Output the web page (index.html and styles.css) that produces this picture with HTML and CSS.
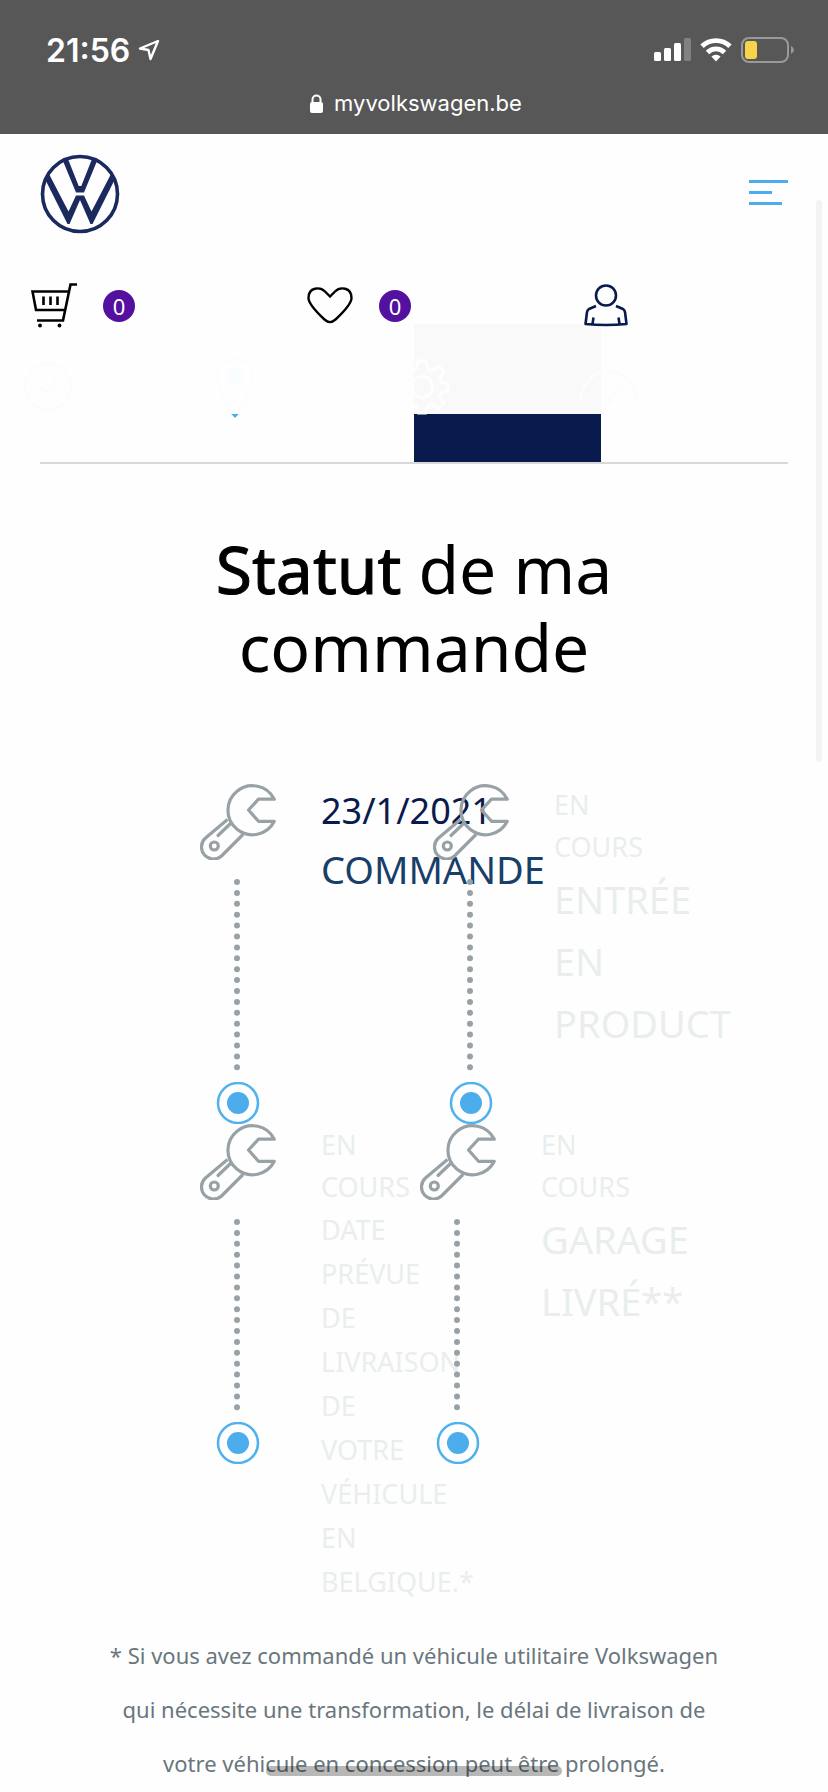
FILE: index.html
```html
<!DOCTYPE html>
<html lang="fr">
<head>
<meta charset="utf-8">
<meta name="viewport" content="width=device-width, initial-scale=1">
<title>Statut de ma commande</title>
<link rel="stylesheet" href="styles.css">
</head>
<body>
<svg class="sprite" aria-hidden="true">
  <symbol id="wrench" viewBox="0 0 76 76">
    <g fill="none" stroke="#98a2a6" stroke-width="3.2" stroke-linejoin="round">
      <path d="M74.300 15.200H58.500L48.500 26L58.500 37.300H74.300A24.500 24.500 0 1 1 74.300 15.200Z"/>
      <path d="M27.500 35.500L5.500 54A12 12 0 0 0 21.500 72L43 50.500"/>
      <path d="M30 40L18 51.500" stroke-linecap="round"/>
      <circle cx="14.300" cy="62" r="4"/>
    </g>
  </symbol>
  <symbol id="track" viewBox="0 0 44 230">
    <path d="M21 6V193" fill="none" stroke="#98a2a6" stroke-width="6" stroke-linecap="round" stroke-dasharray="0 10.900"/>
  </symbol>
  <symbol id="target" viewBox="0 0 44 42">
    <circle cx="22" cy="21" r="20" fill="none" stroke="#4eb2ee" stroke-width="2.500"/>
    <circle cx="22" cy="21" r="11" fill="#4daceb"/>
  </symbol>
</svg>

<div class="status">
  <div class="status-row">
    <div class="clock">21:56
      <svg width="22" height="22" viewBox="0 0 22 22"><path d="M20 2L2 9.500L10.500 11L12.500 20Z" fill="none" stroke="#fff" stroke-width="2.400" stroke-linejoin="round"/></svg>
    </div>
    <div class="indicators">
      <svg width="37" height="24" viewBox="0 0 37 24"><g fill="#fff"><rect y="14" width="7" height="9" rx="1.500"/><rect x="10" y="10" width="7" height="13" rx="1.500"/><rect x="20" y="5" width="7" height="18" rx="1.500"/><rect x="30" width="7" height="23" rx="1.500" opacity=".25"/></g></svg>
      <svg width="32" height="24" viewBox="0 0 32 24"><g fill="none" stroke="#fff" stroke-width="4.800"><path d="M2 8.300A20 20 0 0 1 30 8.300"/><path d="M7.500 14.500A12 12 0 0 1 24.500 14.500"/></g><path d="M11.400 18.500A7 7 0 0 1 20.600 18.500L16 23.500Z" fill="#fff"/></svg>
      <svg width="53" height="26" viewBox="0 0 53 26"><rect x="1" y="1" width="46" height="24" rx="7" fill="none" stroke="#999" stroke-width="2"/><rect x="4" y="4" width="12" height="18" rx="3" fill="#f7d44a"/><path d="M50 9Q53 10.500 53 13Q53 15.500 50 17Z" fill="#999"/></svg>
    </div>
  </div>
  <div class="address">
    <svg width="13" height="19" viewBox="0 0 13 19"><rect y="8" width="13" height="11" rx="2" fill="#fff"/><path d="M2.500 9V5.500A4 4 0 0 1 10.500 5.500V9" fill="none" stroke="#fff" stroke-width="2"/></svg>
    <span>myvolkswagen.be</span>
  </div>
</div>

<header class="header">
  <div class="brand">
    <a href="#" aria-label="Volkswagen"><svg width="80" height="80" viewBox="0 0 80 80">
      <circle cx="40" cy="40" r="37.500" fill="none" stroke="#1a2a5e" stroke-width="3.600"/>
      <path d="M23 7L28 5L38.700 32H41.300L52 5L57 7L44 38.500H36Z" fill="#1a2a5e"/>
      <path d="M5 25L9 20L28.500 57.500L36 41.500H44L51.500 57.500L71 20L75 25L52.500 70H50.500L40 46L29.500 70H27.500Z" fill="#1a2a5e"/>
    </svg></a>
    <button class="menu" aria-label="Menu"><span></span><span></span><span></span></button>
  </div>
  <div class="tools">
    <a class="tool" href="#" aria-label="Panier">
      <svg width="46" height="46" viewBox="0 0 46 46"><path d="M46 1.500H39.500L32 37.500H6M38 8.500H1.500L5 27H34M12.500 13.500V22M19.500 13.500V22M26.500 13.500V22" fill="none" stroke="#000" stroke-width="2.600"/><circle cx="9" cy="42.500" r="1.900"/><circle cx="28.500" cy="42.500" r="1.900"/></svg>
      <span class="badge">0</span>
    </a>
    <a class="tool" href="#" aria-label="Favoris">
      <svg width="46" height="46" viewBox="0 0 46 46"><path d="M23 13.500L18 8.500C13 3.500 1.500 4 1.500 15C1.500 21 10 29.500 17.500 36.500C21.500 40 24.500 40 28.500 36.500C36 29.500 44.500 21 44.500 15C44.500 4 33 3.500 28 8.500Z" fill="none" stroke="#000" stroke-width="2.400"/></svg>
      <span class="badge">0</span>
    </a>
    <a class="tool" href="#" aria-label="Mon compte">
      <svg width="46" height="46" viewBox="0 0 46 46"><g fill="none" stroke="#091b4c" stroke-width="2.600" stroke-linejoin="round"><circle cx="23" cy="12.500" r="10"/><path d="M13 23L6 26Q4.500 27 4 29L2.500 41Q23 43 43.500 41L42 29Q41.500 27 40 26L33 23M10.500 34.500L9.500 41M35.500 34.500L36.500 41"/></g></svg>
    </a>
  </div>
</header>

<nav class="tabs">
  <a class="tab" href="#" aria-label="Historique"><svg width="64" height="64" viewBox="0 0 64 64"><g fill="none" stroke="#4daceb" stroke-width="3"><circle cx="32" cy="32" r="23"/><path d="M21 31L30 36Q33 37 35 33L41 22"/></g></svg></a>
  <a class="tab" href="#" aria-label="Concessionnaire"><svg width="64" height="64" viewBox="0 0 64 64"><path d="M32 61Q28 57 25 50Q14 34 14 22A18 18 0 0 1 50 22Q50 34 39 50Q36 57 32 61Z" fill="none" stroke="#4daceb" stroke-width="2.500"/><path d="M27 58H37L32 62.500Z" fill="#4daceb"/><circle cx="32" cy="21" r="8" fill="#4daceb"/></svg></a>
  <a class="tab tab-active" href="#" aria-label="Statut"><svg width="64" height="64" viewBox="0 0 64 64"><g fill="none" stroke="#fff" stroke-width="3" stroke-linejoin="round"><circle cx="32" cy="32" r="10.500"/><path d="M28 6H36L38 14L42 15.500L49 11L54 17L49.500 23L51 27L58 29V36L51 38L49.500 42L54 48L48 53.500L42 49L38 51L36 58H28L26 51L22 49L16 53.500L10 48L14.500 42L13 38L6 36V29L13 27L14.500 23L10 17L15 11L22 15.500L26 14Z"/></g></svg></a>
  <a class="tab" href="#" aria-label="Entretien"><svg width="64" height="64" viewBox="0 0 64 64"><path d="M4 46A28 30 0 0 1 60 46M32 45L46 31" fill="none" stroke="#4daceb" stroke-width="3"/><circle cx="32" cy="45" r="4" fill="#4daceb"/></svg></a>
</nav>

<main>
  <h1 class="title"><span>Statut</span> de ma commande</h1>
  <section class="steps">
    <div class="steps-row">
      <article class="step">
        <div class="step-text step-done"><p class="date">23/1/2021</p><p class="name">COMMANDE</p></div>
        <div class="marker"><svg class="wrench"><use href="#wrench"/></svg><svg class="track"><use href="#track"/></svg><svg class="target"><use href="#target"/></svg></div>
      </article>
      <article class="step">
        <div class="step-text"><p class="state">EN COURS</p><p class="name">ENTRÉE EN PRODUCT</p></div>
        <div class="marker"><svg class="wrench"><use href="#wrench"/></svg><svg class="track"><use href="#track"/></svg><svg class="target"><use href="#target"/></svg></div>
      </article>
    </div>
    <div class="steps-row steps-row-last">
      <article class="step">
        <div class="step-text"><p class="state">EN COURS</p><p class="detail">DATE PRÉVUE DE LIVRAISON DE<br>VOTRE VÉHICULE EN BELGIQUE.*</p></div>
        <div class="marker"><svg class="wrench"><use href="#wrench"/></svg><svg class="track"><use href="#track"/></svg><svg class="target"><use href="#target"/></svg></div>
      </article>
      <article class="step">
        <div class="step-text"><p class="state">EN COURS</p><p class="name">GARAGE LIVRÉ**</p></div>
        <div class="marker"><svg class="wrench"><use href="#wrench"/></svg><svg class="track"><use href="#track"/></svg><svg class="target"><use href="#target"/></svg></div>
      </article>
    </div>
  </section>
  <p class="note">* Si vous avez commandé un véhicule utilitaire Volkswagen qui nécessite une transformation, le délai de livraison de votre véhicule en concession peut être prolongé.</p>
</main>
<div class="scrollbar"></div>
<div class="home-bar"></div>
</body>
</html>
```
FILE: styles.css
```css
* { box-sizing: border-box; }
body { margin: 0; position: relative; min-height: 100vh; background: #fefefe; font-family: "Noto Sans", "Open Sans", sans-serif; color: #000; }
p, h1 { margin: 0; }
svg { display: block; flex: none; }
.sprite { position: absolute; width: 0; height: 0; }

.status { background: #575757; color: #fff; height: 134px; padding-top: 30px; font-family: Inter, "Liberation Sans", sans-serif; }
.status-row { display: flex; justify-content: space-between; align-items: center; height: 40px; padding: 0 34px 0 46px; }
.clock { display: flex; align-items: center; gap: 8px; font-size: 32px; font-weight: 600; }
.indicators { display: flex; align-items: center; gap: 9px; }
.address { display: flex; justify-content: center; align-items: center; gap: 11px; margin-top: 17px; padding-left: 4px; line-height: 32px; font-size: 22px; }

.header { position: relative; z-index: 1; height: 280px; background: rgba(254, 254, 254, .98); }
.brand { display: flex; justify-content: space-between; align-items: center; height: 120px; padding: 0 40px; }
.menu { display: flex; flex-direction: column; gap: 8px; width: 39px; padding: 0 0 3px; border: 0; background: none; }
.menu span { height: 3px; width: 39px; background: #4daceb; }
.menu span:nth-child(2) { width: 23px; }
.menu span:nth-child(3) { width: 33px; }
.tools { display: grid; grid-template-columns: repeat(3, 1fr); padding-top: 29px; }
.tool { display: flex; align-items: center; gap: 26px; padding-left: 31px; text-decoration: none; }
.badge { width: 32px; height: 32px; border-radius: 50%; background: #54109e; color: #fff; font-size: 22px; line-height: 32px; text-align: center; }

.tabs { display: grid; grid-template-columns: repeat(4, 1fr); margin: -90px 40px 0; border-bottom: 2px solid #d8d8d8; }
.tab { height: 138px; padding-top: 31px; }
.tab svg { margin-left: -24px; }
.tab-active { background: #091b4c; overflow: hidden; }

.title { max-width: 500px; margin: 65px auto 0; text-align: center; font-size: 66px; line-height: 78px; font-weight: 400; }
.title span { -webkit-text-stroke: 1px #000; }

.steps { margin-top: 99px; padding-left: 200px; }
.steps-row { display: flex; height: 340px; }
.steps-row-last { height: auto; }
.step { display: flex; flex-direction: row-reverse; justify-content: flex-end; flex: none; gap: 45px; width: 233px; }
.steps-row-last .step { width: 220px; }
.marker { flex: none; width: 76px; }
.wrench { width: 76px; height: 76px; }
.track { width: 44px; height: 230px; margin: 16px 0 -24px 16px; }
.target { width: 44px; height: 42px; margin-left: 16px; }
.step-text { flex: none; color: #e9eeed; }
.step-text p { width: min-content; }
.date { font-size: 36px; line-height: 54px; color: #091b4c; }
.name { font-size: 38px; line-height: 62px; }
.step-done .name { color: #173f68; }
.state { font-size: 27px; line-height: 42px; }
.step-text .detail { width: 0; font-size: 27px; line-height: 44px; }

.note { max-width: 640px; margin: 24px auto 0; text-align: center; font-size: 22px; line-height: 54px; color: #6a767d; }

.scrollbar { position: absolute; top: 200px; right: 6px; width: 6px; height: 562px; border-radius: 3px; background: #f3f3f3; z-index: 2; }
.home-bar { position: absolute; bottom: 16px; left: 50%; width: 296px; height: 10px; margin-left: -148px; border-radius: 5px; background: rgba(0, 0, 0, .28); }
```
